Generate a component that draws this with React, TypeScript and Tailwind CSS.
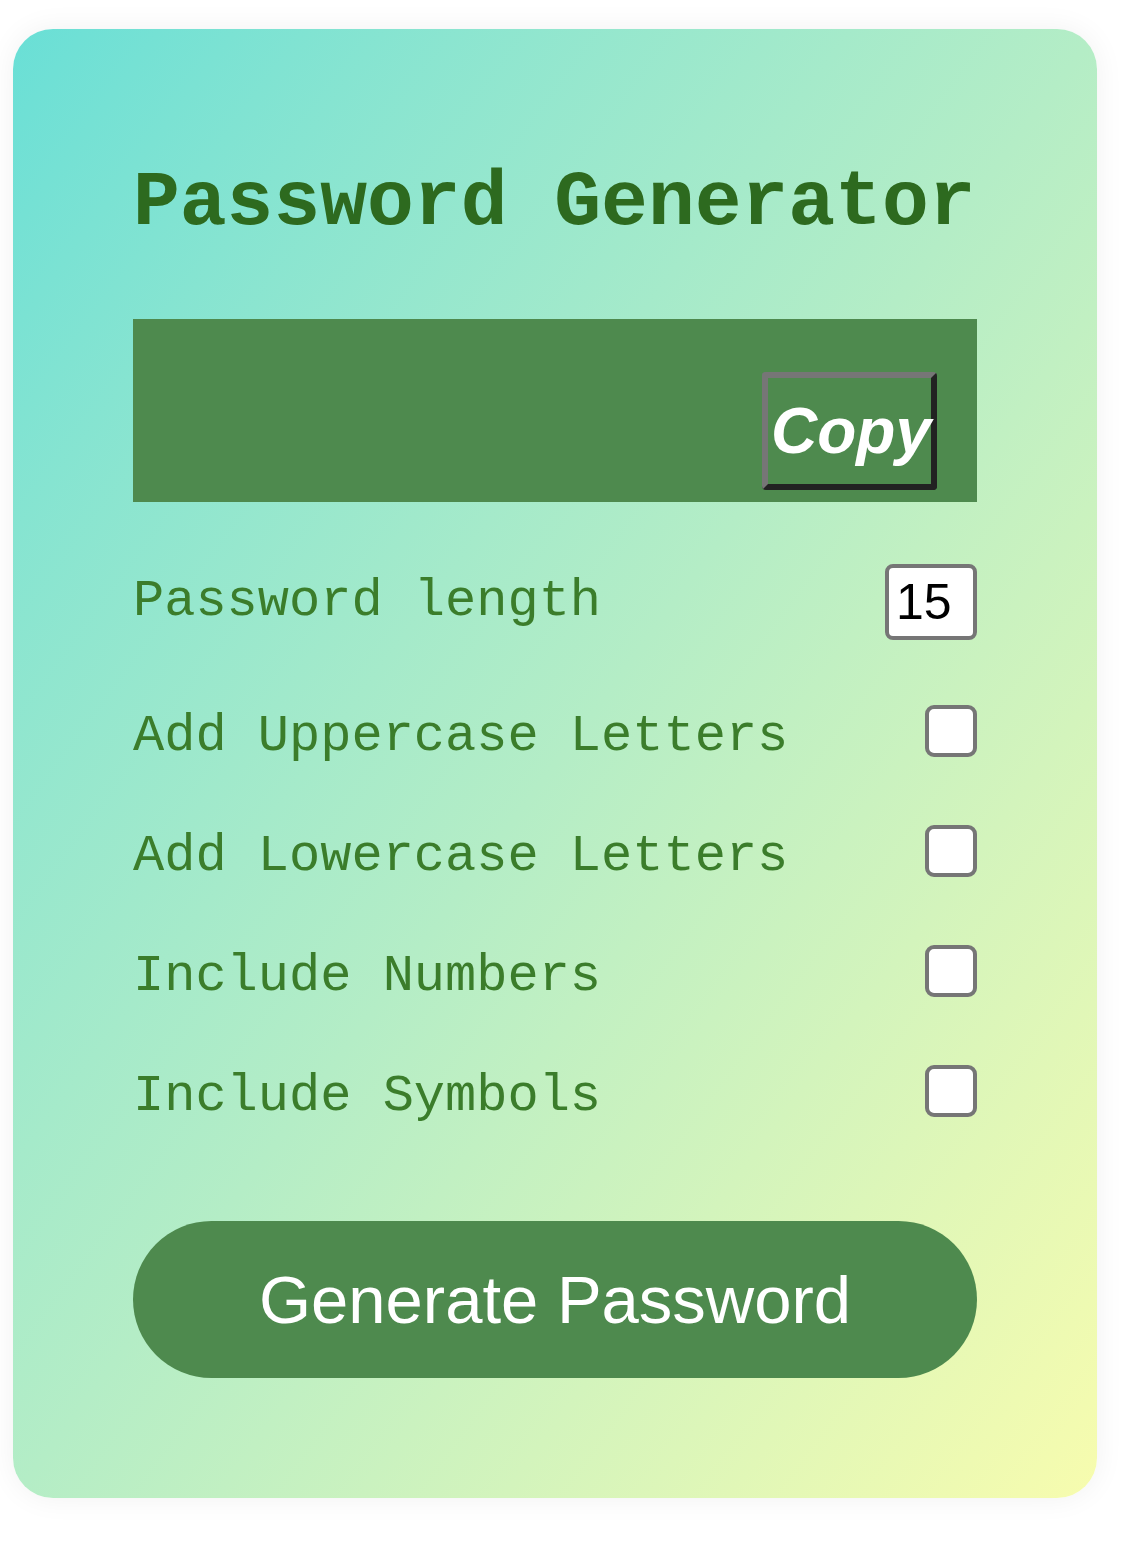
import { useState } from "react";

const options = [
  "Add Uppercase Letters",
  "Add Lowercase Letters",
  "Include Numbers",
  "Include Symbols",
];

export default function App() {
  const [length, setLength] = useState("15");

  return (
    <div className="min-h-[1544px] w-full bg-white pt-[29px] pl-[13px]">
      <div className="flex h-[1469px] w-[1084px] flex-col rounded-[40px] bg-linear-to-br from-[#69dfd6] via-[#b4edc6] to-[#f7fcae] px-[120px] pt-[135px] shadow-[0_0_30px_rgba(0,0,0,0.06)]">
        <h1 className="whitespace-nowrap font-['Liberation_Mono',monospace] text-[78px] font-bold leading-none text-[#2d6a1f]">
          Password Generator
        </h1>

        <div className="mt-[77px] flex h-[183px] items-end justify-end bg-[#4e8a4e] pr-[40px] pb-[12px]">
          <button className="h-[118px] w-[175px] overflow-visible whitespace-nowrap rounded-[4px] border-[6px] border-t-[#767676] border-l-[#767676] border-r-[#222] border-b-[#222] bg-[#4e8a4e] pl-[3px] text-left font-['Liberation_Sans',Arial,sans-serif] text-[64px] font-bold italic leading-none text-white">
            Copy
          </button>
        </div>

        <div className="mt-[62px] flex h-[76px] items-center justify-between">
          <label className="font-['Liberation_Mono',monospace] text-[52px] leading-none text-[#3b7d2b]">
            Password length
          </label>
          <input
            type="number"
            value={length}
            onChange={(e) => setLength(e.target.value)}
            className="h-[76px] w-[92px] rounded-[8px] border-[4px] border-[#767676] bg-white pl-[7px] font-['Liberation_Sans',Arial,sans-serif] text-[50px] leading-none text-black outline-none [appearance:textfield]"
          />
        </div>

        <div className="mt-[65px] flex flex-col gap-[68px]">
          {options.map((opt) => (
            <div key={opt} className="flex h-[52px] items-center justify-between">
              <label className="mt-[12px] font-['Liberation_Mono',monospace] text-[52px] leading-none text-[#3b7d2b]">
                {opt}
              </label>
              <input
                type="checkbox"
                className="h-[52px] w-[52px] appearance-none rounded-[9px] border-[4px] border-[#767676] bg-white"
              />
            </div>
          ))}
        </div>

        <button className="mt-[104px] h-[157px] w-full rounded-full bg-[#4e8a4e] font-['Liberation_Sans',Arial,sans-serif] text-[67px] leading-none text-white">
          Generate Password
        </button>
      </div>
    </div>
  );
}
